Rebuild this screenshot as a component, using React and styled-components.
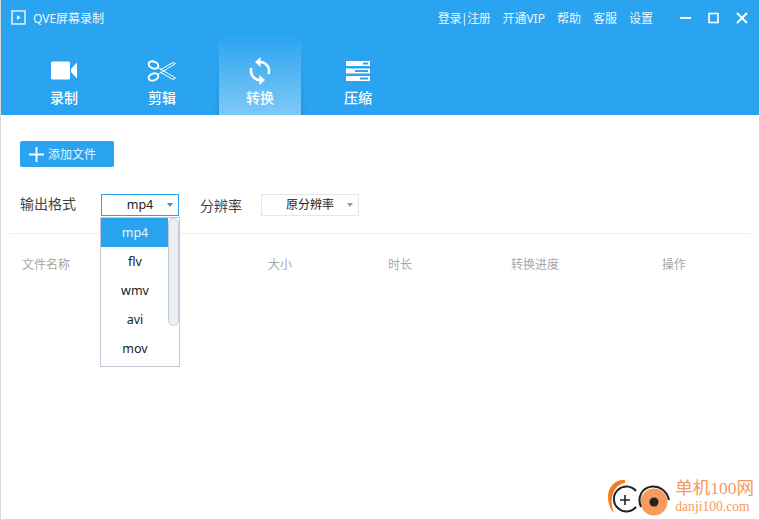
import React from 'react';
import styled, { createGlobalStyle } from 'styled-components';

const GlobalStyle = createGlobalStyle`
  html, body {
    margin: 0;
    padding: 0;
    background: #fff;
  }
  body {
    font-family: 'Noto Sans', 'Noto Sans CJK SC', sans-serif;
  }
`;

const Window = styled.div`
  position: relative;
  width: 760px;
  height: 520px;
  box-sizing: border-box;
  overflow: hidden;
  background: #fff;
  border-left: 1px solid #d8d8d8;
  border-right: 1px solid #d8d8d8;
  border-bottom: 1px solid #d8d8d8;
`;

const Header = styled.div`
  height: 115px;
  margin: 0 -1px;
  background: #2aa4f0;
  color: #fff;
  display: flex;
  flex-direction: column;
  overflow: hidden;
`;

const TitleBar = styled.div`
  height: 35px;
  display: flex;
  align-items: center;
  padding: 0 12px 0 11px;
`;

const AppTitle = styled.div`
  font-size: 12px;
  margin-left: 7px;
  color: #eaf6fe;
`;

const TopMenu = styled.div`
  margin-left: auto;
  display: flex;
  align-items: center;
  gap: 12px;
  font-size: 12px;
  color: #eaf6fe;
`;

const MenuItem = styled.div`
  letter-spacing: ${(p) => (p.$tight ? '-0.4px' : '0')};
`;

const WinButtons = styled.div`
  display: flex;
  align-items: center;
  gap: 17px;
  margin-left: 15px;
  height: 14px;
`;

const Tabs = styled.div`
  display: flex;
  gap: 16px;
  padding-left: 23px;
  flex: 1;
`;

const Tab = styled.div`
  width: 82px;
  height: 80px;
  box-sizing: border-box;
  padding-top: 22px;
  display: flex;
  flex-direction: column;
  align-items: center;
  font-size: 14px;
  line-height: 20px;
  font-weight: 500;
  position: relative;
  background: ${(p) =>
    p.$active
      ? 'linear-gradient(180deg, rgba(255,255,255,0) 0%, rgba(255,255,255,0.14) 35%, rgba(255,255,255,0.4) 100%)'
      : 'transparent'};

  &::before {
    content: '';
    display: ${(p) => (p.$active ? 'block' : 'none')};
    position: absolute;
    top: 0;
    left: -5px;
    right: -5px;
    bottom: 0;
    background:
      linear-gradient(90deg, rgba(20, 110, 180, 0) 0, rgba(20, 110, 180, 0.3) 5px, transparent 5px),
      linear-gradient(270deg, rgba(20, 110, 180, 0) 0, rgba(20, 110, 180, 0.3) 5px, transparent 5px);
    mask-image: linear-gradient(180deg, transparent 20%, #000 100%);
    pointer-events: none;
  }
`;

const TabIcon = styled.div`
  height: 26px;
  margin-top: 1px;
  display: flex;
  align-items: center;
  justify-content: center;
  margin-bottom: 4px;
`;

const Body = styled.div`
  padding: 26px 9px 0;
`;

const AddButton = styled.div`
  width: 94px;
  height: 26px;
  margin-left: 10px;
  display: flex;
  align-items: center;
  box-sizing: border-box;
  padding-left: 9px;
  gap: 4px;
  background: #2aa4f0;
  border-radius: 2px;
  color: #e4f4fe;
  font-size: 12px;
`;

const FormRow = styled.div`
  display: flex;
  align-items: center;
  margin: 27px 0 0 10px;
  height: 22px;
  font-size: 14px;
  line-height: 20px;
  color: #444;
`;

const Label = styled.div`
  width: ${(p) => p.$width}px;
  margin-left: ${(p) => p.$offset || 0}px;
  position: relative;
  top: ${(p) => p.$shift || 0}px;
`;

const Select = styled.div`
  width: ${(p) => p.$width}px;
  height: 22px;
  box-sizing: border-box;
  border: 1px solid ${(p) => (p.$open ? '#2aa4f0' : '#e6e6e6')};
  display: flex;
  align-items: center;
  justify-content: center;
  padding-bottom: 1px;
  position: relative;
  font-size: ${(p) => (p.$open ? 12.5 : 12)}px;
  color: #222;
`;

const Caret = styled.span`
  position: absolute;
  right: 5px;
  top: 8px;
  width: 0;
  height: 0;
  border-left: 3px solid transparent;
  border-right: 3px solid transparent;
  border-top: 4px solid ${(p) => (p.$open ? '#3a8fd0' : '#999')};
`;

const Divider = styled.div`
  height: 1px;
  background: #ececec;
  margin-top: 17px;
`;

const TableHead = styled.div`
  display: grid;
  grid-template-columns: 246px 120px 123px 151px auto;
  padding-left: 12px;
  margin-top: 21px;
  font-size: 12px;
  color: #a6a6a6;
`;

const Dropdown = styled.div`
  position: absolute;
  left: 99px;
  top: 217px;
  width: 80px;
  height: 150px;
  box-sizing: border-box;
  border: 1px solid #c3c8d6;
  background: #fff;
  padding-right: 11px;
  z-index: 2;
`;

const Option = styled.div`
  height: 29px;
  box-sizing: border-box;
  padding-left: 1px;
  display: flex;
  align-items: center;
  justify-content: center;
  font-size: 12.5px;
  color: ${(p) => (p.$selected ? '#eaf6fe' : '#222')};
  background: ${(p) => (p.$selected ? '#2aa4f0' : '#fff')};
`;

const ScrollThumb = styled.div`
  position: absolute;
  top: 0;
  right: 0;
  width: 11px;
  height: 108px;
  box-sizing: border-box;
  background: #ebeff2;
  border: 1px solid #c3cbd8;
  border-radius: 6px;
`;

const Watermark = styled.div`
  position: absolute;
  right: 0;
  bottom: 0;
  height: 44px;
  display: flex;
  align-items: center;
  gap: 5px;
  background: #fff;
  padding-right: 5px;
`;

const MarkText = styled.div`
  display: flex;
  flex-direction: column;
  color: #f79a5e;
  font-family: 'Liberation Serif', 'Noto Sans CJK SC', serif;
  line-height: 1;
`;

const MarkTitle = styled.div`
  font-size: 17.5px;
`;

const MarkUrl = styled.div`
  font-size: 13.6px;
  margin-top: 3px;
`;

const PlayLogo = () => (
  <svg width="15" height="15" viewBox="0 0 15 15">
    <rect x="1" y="1" width="13" height="13" fill="none" stroke="#fff" strokeWidth="1.3" />
    <path d="M6 5l3.6 2.5L6 10z" fill="#fff" />
  </svg>
);

const CameraIcon = () => (
  <svg width="26" height="20" viewBox="0 0 26 20">
    <rect x="0" y="0.5" width="19" height="18" rx="1.5" fill="#fff" />
    <path d="M20 8l6-6.5v16l-6-6.5z" fill="#fff" />
  </svg>
);

const ScissorsIcon = () => (
  <svg width="30" height="24" viewBox="0 0 30 24" fill="none" stroke="#fff">
    <ellipse cx="6.5" cy="6" rx="5" ry="3.4" strokeWidth="2" transform="rotate(22 6.5 6)" />
    <ellipse cx="6.5" cy="18" rx="5" ry="3.4" strokeWidth="2" transform="rotate(-22 6.5 18)" />
    <path d="M11 8.5L28.5 19l-2.5 1.5L13 13" strokeWidth="1" />
    <path d="M11 15.5L28.5 4.5L26 3.5L13 11" strokeWidth="1" />
  </svg>
);

const ConvertIcon = () => (
  <svg width="22" height="28" viewBox="0 0 22 28" fill="none">
    <path d="M11 5A9 9 0 0 1 19.5 17" stroke="#fff" strokeWidth="2.6" />
    <path d="M11 23A9 9 0 0 1 2.5 11" stroke="#fff" strokeWidth="2.6" />
    <path d="M11.5 0v10L6 5z" fill="#fff" />
    <path d="M10.5 18v10L16 23z" fill="#fff" />
  </svg>
);

const CompressIcon = () => (
  <svg width="24" height="20" viewBox="0 0 24 20">
    <rect x="0" y="0" width="24" height="5" fill="#fff" />
    <rect x="0" y="7.5" width="24" height="5" fill="#fff" />
    <rect x="0" y="15" width="24" height="5" fill="#fff" />
    <rect x="17" y="1.5" width="5" height="2" fill="#2aa4f0" />
    <rect x="9" y="9" width="13" height="2" fill="#2aa4f0" />
    <rect x="14" y="16.5" width="8" height="2" fill="#2aa4f0" />
  </svg>
);

const PlusIcon = () => (
  <svg width="15" height="15" viewBox="0 0 15 15">
    <path d="M7.5 0v15M0 7.5h15" stroke="#fff" strokeWidth="1.8" />
  </svg>
);

const MinIcon = () => (
  <svg width="11" height="12" viewBox="0 0 11 12">
    <rect x="0" y="5" width="11" height="2" fill="#fff" />
  </svg>
);

const MaxIcon = () => (
  <svg width="11" height="12" viewBox="0 0 11 12">
    <rect x="1" y="1.5" width="9" height="9" fill="none" stroke="#fff" strokeWidth="1.6" />
  </svg>
);

const CloseIcon = () => (
  <svg width="12" height="12" viewBox="0 0 12 12">
    <path d="M1 1l10 10M11 1L1 11" stroke="#fff" strokeWidth="2" />
  </svg>
);

const DanjiLogo = () => (
  <svg width="62" height="42" viewBox="0 0 62 42" fill="none">
    <path d="M17 4C7 3 0 11 0 21c0 6 2 12 6 16-2-5-3-10-2-15C5 14 10 8 17 7z" fill="#f47b20" />
    <path d="M28 15A12.5 12.5 0 1 0 28 31" stroke="#222" strokeWidth="2" />
    <path d="M12 24h10M17 19v10" stroke="#222" strokeWidth="1.6" />
    <circle cx="46" cy="26" r="13.5" fill="#f79a5e" />
    <path d="M33 31C29 22 33 12 44 10.5C52 10 59 15 61 24" stroke="#222" strokeWidth="2" />
    <circle cx="46" cy="26" r="4.5" fill="#222" />
  </svg>
);

const menuItems = ['登录|注册', '开通VIP', '帮助', '客服', '设置'];
const tabs = [
  { name: '录制', icon: <CameraIcon /> },
  { name: '剪辑', icon: <ScissorsIcon /> },
  { name: '转换', icon: <ConvertIcon />, active: true },
  { name: '压缩', icon: <CompressIcon /> },
];
const formats = ['mp4', 'flv', 'wmv', 'avi', 'mov'];

const App = () => {
  return (
    <Window>
      <GlobalStyle />
      <Header>
        <TitleBar>
          <PlayLogo />
          <AppTitle>QVE屏幕录制</AppTitle>
          <TopMenu>
            {menuItems.map((item, i) => (
              <MenuItem key={item} $tight={i === 0}>{item}</MenuItem>
            ))}
            <WinButtons>
              <MinIcon />
              <MaxIcon />
              <CloseIcon />
            </WinButtons>
          </TopMenu>
        </TitleBar>
        <Tabs>
          {tabs.map((tab) => (
            <Tab key={tab.name} $active={tab.active}>
              <TabIcon>{tab.icon}</TabIcon>
              {tab.name}
            </Tab>
          ))}
        </Tabs>
      </Header>
      <Body>
        <AddButton>
          <PlusIcon />
          添加文件
        </AddButton>
        <FormRow>
          <Label $width={81} $shift={-1}>输出格式</Label>
          <Select $width={78} $open>
            mp4
            <Caret $open />
          </Select>
          <Label $width={61} $offset={21} $shift={1}>分辨率</Label>
          <Select $width={98}>
            原分辨率
            <Caret />
          </Select>
        </FormRow>
        <Divider />
        <TableHead>
          <div>文件名称</div>
          <div>大小</div>
          <div>时长</div>
          <div>转换进度</div>
          <div>操作</div>
        </TableHead>
      </Body>
      <Dropdown>
        {formats.map((f, i) => (
          <Option key={f} $selected={i === 0}>
            {f}
          </Option>
        ))}
        <ScrollThumb />
      </Dropdown>
      <Watermark>
        <DanjiLogo />
        <MarkText>
          <MarkTitle>单机100网</MarkTitle>
          <MarkUrl>danji100.com</MarkUrl>
        </MarkText>
      </Watermark>
    </Window>
  );
};

export default App;
